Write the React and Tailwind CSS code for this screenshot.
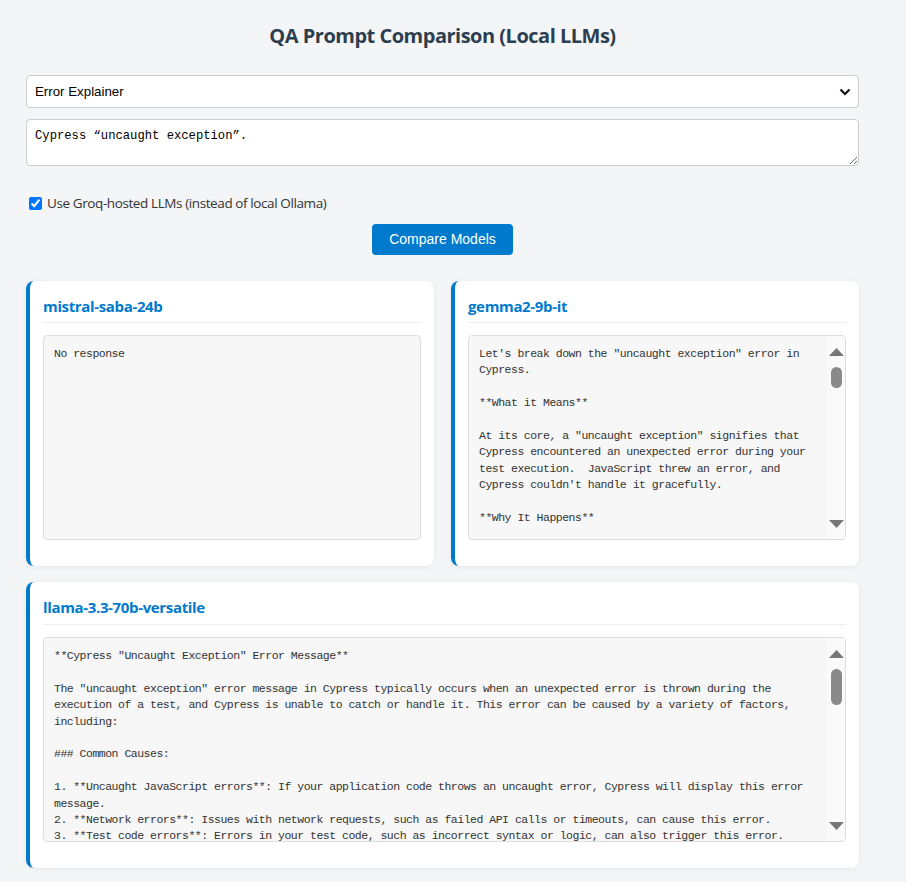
import React from 'react';

const gemmaText = `Let's break down the "uncaught exception" error in
Cypress.

**What it Means**

At its core, a "uncaught exception" signifies that
Cypress encountered an unexpected error during your
test execution.  JavaScript threw an error, and
Cypress couldn't handle it gracefully.

**Why It Happens**`;

const llamaText = `**Cypress "Uncaught Exception" Error Message**

The "uncaught exception" error message in Cypress typically occurs when an unexpected error is thrown during the
execution of a test, and Cypress is unable to catch or handle it. This error can be caused by a variety of factors,
including:

### Common Causes:

1. **Uncaught JavaScript errors**: If your application code throws an uncaught error, Cypress will display this error
message.
2. **Network errors**: Issues with network requests, such as failed API calls or timeouts, can cause this error.
3. **Test code errors**: Errors in your test code, such as incorrect syntax or logic, can also trigger this error.`;

const FakeScrollbar = ({ thumb }) => (
  <div className="w-[18px] shrink-0 bg-[#fafafa] flex flex-col items-center">
    <svg width="15" height="9" viewBox="0 0 15 9" className="mt-[12px]">
      <polygon points="7.5,0 15,8 0,8" fill="#777" />
    </svg>
    <div className={`mt-[10px] w-[11px] rounded-full bg-[#8a8a8a] ${thumb}`} />
    <div className="flex-1" />
    <svg width="15" height="9" viewBox="0 0 15 9" className="mb-[10px]">
      <polygon points="0,0 15,0 7.5,8" fill="#777" />
    </svg>
  </div>
);

const ModelCard = ({ name, text, thumb, className = '', head = 'pb-[4px]' }) => (
  <div
    className={`bg-white rounded-lg border-l-4 border-[#007acc] shadow-[0_1px_5px_rgba(0,0,0,0.06)] px-[13px] pt-[13px] pb-[26px] ${className}`}
  >
    <h3
      className={`text-[15px] leading-[24px] tracking-[-0.35px] font-bold text-[#007acc] border-b border-[#eee] font-['Open_Sans',sans-serif] ${head}`}
    >
      {name}
    </h3>
    <div className="mt-[12px] h-[205px] flex overflow-hidden rounded border border-[#ddd] bg-[#f7f7f7]">
      <pre className="flex-1 overflow-hidden px-[10px] pt-[10px] font-['Liberation_Mono',monospace] text-[11.5px] tracking-[-0.5px] leading-[16.4px] text-[#333] whitespace-pre">
        {text}
      </pre>
      {thumb && <FakeScrollbar thumb={thumb} />}
    </div>
  </div>
);

export default function App() {
  return (
    <div className="min-h-screen bg-[#f4f5f7] font-['Open_Sans',sans-serif] text-[#333]">
      <div className="w-[833px] ml-[26px] pt-[22px] pb-[14px]">
        <h1 className="text-center text-[20px] leading-[28px] tracking-[-0.5px] font-bold text-[#2c3e50]">
          QA Prompt Comparison (Local LLMs)
        </h1>

        <div className="relative mt-[25px]">
          <select
            defaultValue="error"
            className="w-full h-[33px] appearance-none rounded border border-[#ccc] bg-white pl-[8px] text-[13.3px] text-black font-['Liberation_Sans',Arial,sans-serif] outline-none"
          >
            <option value="error">Error Explainer</option>
            <option value="test">Test Case Generator</option>
          </select>
          <svg
            width="12"
            height="8"
            viewBox="0 0 12 8"
            className="absolute right-[8px] top-[13px] pointer-events-none"
          >
            <path d="M1.5 1.5 L6 6 L10.5 1.5" fill="none" stroke="#111" strokeWidth="2.2" />
          </svg>
        </div>

        <textarea
          defaultValue="Cypress “uncaught exception”."
          className="block mt-[11px] w-full h-[47px] rounded border border-[#ccc] bg-white px-[8px] pt-[7px] font-['Liberation_Mono',monospace] text-[12.2px] text-black outline-none"
        />

        <label className="mt-[27px] h-[20px] flex items-center gap-[5px] pl-[3px] text-[13.5px] tracking-[-0.4px] text-[#333]">
          <input type="checkbox" defaultChecked className="w-[13px] h-[13px] m-0 accent-[#0075ff]" />
          Use Groq-hosted LLMs (instead of local Ollama)
        </label>

        <div className="mt-[11px] flex justify-center">
          <button className="h-[31px] px-[17px] rounded bg-[#007acc] text-white text-[14px] font-['Liberation_Sans',Arial,sans-serif]">
            Compare Models
          </button>
        </div>

        <div className="mt-[26px] grid grid-cols-2 gap-x-[17px] gap-y-[16px]">
          <ModelCard name="mistral-saba-24b" text="No response" />
          <ModelCard name="gemma2-9b-it" text={gemmaText} thumb="h-[21px]" />
          <ModelCard
            name="llama-3.3-70b-versatile"
            text={llamaText}
            thumb="h-[36px]"
            head="pb-[5px]"
            className="col-span-2"
          />
        </div>
      </div>
    </div>
  );
}
